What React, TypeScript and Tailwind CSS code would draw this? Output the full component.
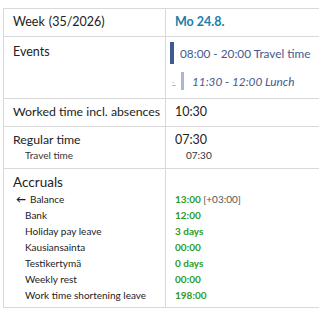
import React from 'react'

const accruals = [
  { label: 'Bank', value: '12:00' },
  { label: 'Holiday pay leave', value: '3 days' },
  { label: 'Kausiansainta', value: '00:00' },
  { label: 'Testikertymä', value: '0 days' },
  { label: 'Weekly rest', value: '00:00' },
  { label: 'Work time shortening leave', value: '198:00' },
]

export default function App() {
  return (
    <div
      className="w-[319px] h-[310px] bg-white overflow-hidden pt-2 pl-[3px] text-[#222] whitespace-nowrap"
      style={{ fontFamily: 'Lato, "Open Sans", sans-serif' }}
    >
      <div className="w-[360px] border-l border-t border-[#d9d9d9] grid grid-cols-[162px_1fr]">
        {/* week header */}
        <div className="h-[28px] border-b border-r border-[#d9d9d9] pl-[9px] flex items-center text-[12.5px]">
          Week <span className="ml-[4px]">(35/2026)</span>
        </div>
        <div className="h-[28px] border-b border-[#d9d9d9] pl-[9px] flex items-center text-[12.5px] font-bold text-[#1a7fa6]">
          Mo 24.8.
        </div>

        {/* events */}
        <div className="h-[62px] border-b border-r border-[#d9d9d9] pl-[9px] pt-[6px] text-[12.5px]">Events</div>
        <div className="h-[62px] border-b border-[#d9d9d9] text-[11.8px] text-[#45598c]">
          <div className="flex items-center mt-[5px] ml-[4px]">
            <div className="w-[4px] h-[22px] bg-[#3d5a91]" />
            <span className="ml-[6px] mt-[2px]">08:00 - 20:00 Travel time</span>
          </div>
          <div className="flex items-center mt-[8px] ml-[6px]">
            <span className="text-[8px] leading-none text-[#888] tracking-[-1px] w-[8px] mt-[4px]">:..</span>
            <div className="w-[3px] h-[18px] bg-[#a9b7d1] ml-[1px]" />
            <span className="ml-[8px] italic mt-[1px]">11:30 - 12:00 Lunch</span>
          </div>
        </div>

        {/* worked time */}
        <div className="h-[28px] border-b border-r border-[#d9d9d9] pl-[9px] flex items-center text-[12.3px]">
          Worked time incl. absences
        </div>
        <div className="h-[28px] border-b border-[#d9d9d9] pl-[9px] flex items-center text-[12.5px]">10:30</div>

        {/* regular */}
        <div className="h-[42px] border-b border-r border-[#d9d9d9] pl-[9px] pt-[4px]">
          <div className="text-[12.3px] leading-[17px]">Regular time</div>
          <div className="text-[10px] leading-[14px] pl-[12px] text-[#333]">Travel time</div>
        </div>
        <div className="h-[42px] border-b border-[#d9d9d9] pl-[9px] pt-[4px]">
          <div className="text-[12.5px] leading-[17px]">07:30</div>
          <div className="text-[10px] leading-[14px] pl-[11px] text-[#333]">07:30</div>
        </div>

        {/* accruals */}
        <div className="h-[139px] border-b border-r border-[#d9d9d9] pl-[9px] pt-[3px]">
          <div className="text-[13.5px] leading-[20px]">Accruals</div>
          <div className="text-[10px] leading-[16px] mt-[-1px]">
            <div className="flex items-center pl-[3px]">
              <span className="text-[10px] font-bold mr-[4px]">&#8592;</span>Balance
            </div>
            {accruals.map((a) => (
              <div key={a.label} className="pl-[12px]">{a.label}</div>
            ))}
          </div>
        </div>
        <div className="h-[139px] border-b border-[#d9d9d9] pl-[9px] pt-[22px] text-[10px] leading-[16px] font-bold text-[#2e9a1e]">
          <div>
            13:00 <span className="font-normal text-[#555]">[+03:00]</span>
          </div>
          {accruals.map((a) => (
            <div key={a.label}>{a.value}</div>
          ))}
        </div>
      </div>
    </div>
  )
}
